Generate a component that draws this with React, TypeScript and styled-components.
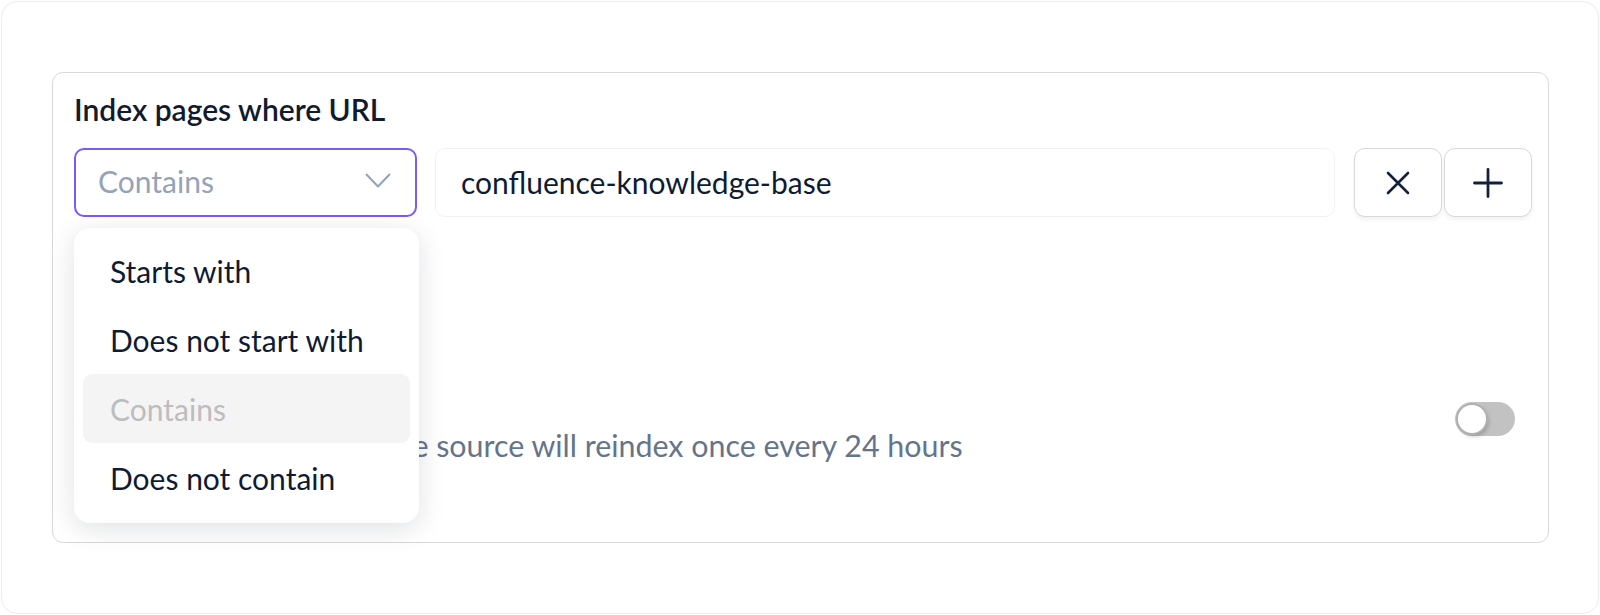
import React from 'react'
import styled, { createGlobalStyle } from 'styled-components'

const GlobalStyle = createGlobalStyle`
  html, body {
    margin: 0;
    padding: 0;
    background: #ffffff;
    font-family: Lato, "Noto Sans", "Liberation Sans", sans-serif;
  }
  * {
    box-sizing: border-box;
  }
`

const Page = styled.div`
  width: 1600px;
  height: 615px;
  padding: 1px;
`

const OuterCard = styled.div`
  height: 613px;
  border: 1px solid #ececf1;
  border-radius: 16px;
  padding: 70px 49px 0 50px;
`

const RuleCard = styled.div`
  position: relative;
  height: 471px;
  border: 1.5px solid #d9d9dc;
  border-radius: 11px;
  padding: 14px 16px 0 21px;
`

const Title = styled.div`
  font-size: 30px;
  font-weight: 600;
  color: #111a2e;
  line-height: 44px;
  margin-bottom: 17px;
`

const RuleRow = styled.div`
  display: flex;
  align-items: center;
`

const SelectWrap = styled.div`
  position: relative;
  width: 343px;
  flex: none;
`

const SelectBox = styled.div`
  height: 69px;
  border: 2px solid #7a5af8;
  border-radius: 10px;
  display: flex;
  align-items: center;
  justify-content: space-between;
  padding: 0 24px 3px 22px;
  font-size: 30px;
  color: #94a3b8;
  background: #fff;
`

const Menu = styled.div`
  position: absolute;
  top: 80px;
  left: 0;
  width: 345px;
  padding: 8px 9px 11px;
  background: #fff;
  border-radius: 16px;
  box-shadow: 0 6px 28px rgba(15, 23, 42, 0.13);
  z-index: 5;
`

const MenuItem = styled.div<{ $active?: boolean }>`
  height: 69px;
  display: flex;
  align-items: center;
  padding-left: 27px;
  border-radius: 9px;
  font-size: 30px;
  color: ${(p) => (p.$active ? '#bdbdbd' : '#0f1b33')};
  background: ${(p) => (p.$active ? '#f4f4f4' : 'transparent')};
`

const TextInput = styled.div`
  flex: 1;
  height: 69px;
  margin: 0 19px 0 18px;
  border: 1.5px solid #eef2f8;
  border-radius: 10px;
  display: flex;
  align-items: center;
  padding: 0 0 2px 25px;
  font-size: 30px;
  color: #0f1b33;
`

const IconButton = styled.button`
  width: 88px;
  height: 69px;
  flex: none;
  border: 1.5px solid #d9d9dc;
  border-radius: 11px;
  background: #fff;
  box-shadow: 0 3px 4px rgba(0, 0, 0, 0.05);
  display: flex;
  align-items: center;
  justify-content: center;
  padding: 0;
  & + & {
    margin-left: 2px;
  }
`

const ReindexRow = styled.div`
  display: flex;
  align-items: flex-start;
  justify-content: space-between;
  margin-top: 168px;
  padding-right: 17px;
`

const ReindexText = styled.div`
  display: flex;
  flex-direction: column;
`

const ReindexTitle = styled.div`
  font-size: 30px;
  font-weight: 600;
  color: #111a2e;
  line-height: 40px;
`

const ReindexHint = styled.div`
  font-size: 30.4px;
  color: #64748b;
  line-height: 40px;
`

const Toggle = styled.div`
  position: relative;
  width: 60px;
  height: 34px;
  margin-top: 17px;
  border-radius: 17px;
  background: #c2c2c2;
`

const Knob = styled.div`
  position: absolute;
  top: 3px;
  left: 3px;
  width: 28px;
  height: 28px;
  border-radius: 50%;
  background: #fff;
  box-shadow: 0 0 0 2px #b0b0b0, 2px 3px 5px rgba(0, 0, 0, 0.25);
`

const Chevron = () => (
  <svg width="26" height="16" viewBox="0 0 26 16" fill="none">
    <path d="M1.5 1.5 L13 13.5 L24.5 1.5" stroke="#94a3b8" strokeWidth="2" strokeLinecap="round" strokeLinejoin="round" />
  </svg>
)

const CloseIcon = () => (
  <svg width="24" height="24" viewBox="0 0 24 24" fill="none">
    <path d="M2 2 L22 22 M22 2 L2 22" stroke="#14213d" strokeWidth="2.6" strokeLinecap="round" />
  </svg>
)

const PlusIcon = () => (
  <svg width="30" height="30" viewBox="0 0 30 30" fill="none">
    <path d="M15 1.5 V28.5 M1.5 15 H28.5" stroke="#14213d" strokeWidth="2.8" strokeLinecap="round" />
  </svg>
)

const options = ['Starts with', 'Does not start with', 'Contains', 'Does not contain']

export default function App() {
  const selected = 'Contains'
  return (
    <>
      <GlobalStyle />
      <Page>
        <OuterCard>
          <RuleCard>
            <Title>Index pages where URL</Title>
            <RuleRow>
              <SelectWrap>
                <SelectBox>
                  <span>{selected}</span>
                  <Chevron />
                </SelectBox>
                <Menu>
                  {options.map((o) => (
                    <MenuItem key={o} $active={o === selected}>
                      {o}
                    </MenuItem>
                  ))}
                </Menu>
              </SelectWrap>
              <TextInput>confluence-knowledge-base</TextInput>
              <IconButton aria-label="Remove rule">
                <CloseIcon />
              </IconButton>
              <IconButton aria-label="Add rule">
                <PlusIcon />
              </IconButton>
            </RuleRow>
            <ReindexRow>
              <ReindexText>
                <ReindexTitle>Auto reindex</ReindexTitle>
                <ReindexHint>When this is activated, the source will reindex once every 24 hours</ReindexHint>
              </ReindexText>
              <Toggle>
                <Knob />
              </Toggle>
            </ReindexRow>
          </RuleCard>
        </OuterCard>
      </Page>
    </>
  )
}
